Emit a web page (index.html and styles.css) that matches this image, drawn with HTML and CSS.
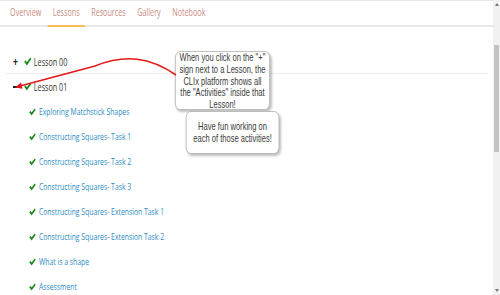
FILE: index.html
```html
<!DOCTYPE html>
<html lang="en">
<head>
  <meta charset="UTF-8">
  <title>Lessons</title>
  <link rel="stylesheet" href="styles.css">
</head>
<body>
  <div class="page">
    <nav class="tabs">
      <a class="tab">Overview</a>
      <a class="tab active">Lessons</a>
      <a class="tab">Resources</a>
      <a class="tab">Gallery</a>
      <a class="tab">Notebook</a>
    </nav>

    <div class="lessons">
      <div class="lesson first">
        <span class="toggle">+</span><svg class="check" viewBox="0 0 10 8"><path d="M0.6 4.2 L2.2 2.8 L3.9 4.6 L8.2 0.4 L9.6 1.8 L3.9 7.6 Z"/></svg>Lesson 00
      </div>
      <div class="lesson">
        <span class="toggle minus"></span><svg class="check" viewBox="0 0 10 8"><path d="M0.6 4.2 L2.2 2.8 L3.9 4.6 L8.2 0.4 L9.6 1.8 L3.9 7.6 Z"/></svg>Lesson 01
      </div>
      <ul class="activities">
        <li><svg class="check" viewBox="0 0 10 8"><path d="M0.6 4.2 L2.2 2.8 L3.9 4.6 L8.2 0.4 L9.6 1.8 L3.9 7.6 Z"/></svg><a>Exploring Matchstick Shapes</a></li>
        <li><svg class="check" viewBox="0 0 10 8"><path d="M0.6 4.2 L2.2 2.8 L3.9 4.6 L8.2 0.4 L9.6 1.8 L3.9 7.6 Z"/></svg><a>Constructing Squares- Task 1</a></li>
        <li><svg class="check" viewBox="0 0 10 8"><path d="M0.6 4.2 L2.2 2.8 L3.9 4.6 L8.2 0.4 L9.6 1.8 L3.9 7.6 Z"/></svg><a>Constructing Squares- Task 2</a></li>
        <li><svg class="check" viewBox="0 0 10 8"><path d="M0.6 4.2 L2.2 2.8 L3.9 4.6 L8.2 0.4 L9.6 1.8 L3.9 7.6 Z"/></svg><a>Constructing Squares- Task 3</a></li>
        <li><svg class="check" viewBox="0 0 10 8"><path d="M0.6 4.2 L2.2 2.8 L3.9 4.6 L8.2 0.4 L9.6 1.8 L3.9 7.6 Z"/></svg><a>Constructing Squares- Extension Task 1</a></li>
        <li><svg class="check" viewBox="0 0 10 8"><path d="M0.6 4.2 L2.2 2.8 L3.9 4.6 L8.2 0.4 L9.6 1.8 L3.9 7.6 Z"/></svg><a>Constructing Squares- Extension Task 2</a></li>
        <li><svg class="check" viewBox="0 0 10 8"><path d="M0.6 4.2 L2.2 2.8 L3.9 4.6 L8.2 0.4 L9.6 1.8 L3.9 7.6 Z"/></svg><a>What is a shape</a></li>
        <li><svg class="check" viewBox="0 0 10 8"><path d="M0.6 4.2 L2.2 2.8 L3.9 4.6 L8.2 0.4 L9.6 1.8 L3.9 7.6 Z"/></svg><a>Assessment</a></li>
      </ul>
    </div>

    <div class="callout callout-one">When you click on the "+"<br>sign next to a Lesson, the<br>CLIx platform shows all<br>the "Activities" inside that<br>Lesson!</div>
    <div class="callout callout-two">Have fun working on<br>each of those activities!</div>
  </div>

  <svg class="arrow" width="500" height="295" viewBox="0 0 500 295">
    <path d="M176 75 C150 57 125 54 95 66 L21 85.8" fill="none" stroke="#e2191b" stroke-width="1.6"/>
    <polygon points="15,87.5 22.6,88.8 21,82.6" fill="#e2191b"/>
  </svg>

  <div class="scrollbar">
    <div class="scroll-up"></div>
    <div class="thumb"></div>
    <div class="scroll-down"></div>
  </div>
</body>
</html>
```

FILE: styles.css
```css
body {
  margin: 0;
  width: 500px;
  height: 295px;
  overflow: hidden;
  background: #fff;
  font-family: 'Open Sans', sans-serif;
  color: #333;
  position: relative;
}
.page {
  position: relative;
  width: 685px;
  transform: scaleX(0.72);
  transform-origin: 0 0;
}
.tabs {
  display: flex;
  gap: 2px;
  height: 24px;
  padding-left: 7px;
  border-top: 1px solid #e6e6e6;
  border-bottom: 2px solid #e8e8e8;
}
.tab {
  padding: 0 7px;
  font-size: 10px;
  line-height: 23px;
  color: #c98b80;
  border-bottom: 2px solid transparent;
  margin-bottom: -2px;
}
.tab.active {
  border-bottom-color: #f7bd55;
}
.lessons {
  padding: 23px 7px 0 8px;
}
.lesson {
  display: flex;
  align-items: center;
  height: 25px;
  font-size: 10px;
  color: #333;
  padding-left: 10px;
}
.lesson.first {
  height: 23px;
  border-bottom: 1px solid #ececec;
}
.toggle {
  display: inline-block;
  width: 15px;
  font-weight: bold;
  font-size: 12px;
  line-height: 12px;
  color: #222;
}
.toggle.minus::before {
  content: "";
  display: block;
  width: 9px;
  height: 2px;
  margin-top: 1px;
  background: #222;
}
.lesson .check {
  width: 11px;
  height: 9px;
  margin-right: 3px;
}
.check {
  width: 10px;
  height: 8px;
  margin-right: 2px;
  fill: #1b8a1b;
  flex-shrink: 0;
}
.activities {
  list-style: none;
  margin: 0;
  padding: 0 0 0 32px;
}
.activities li {
  display: flex;
  align-items: center;
  height: 25px;
  font-size: 9.5px;
}
.activities .check {
  margin-right: 4px;
}
.activities a {
  color: #2c8cc4;
}
.callout {
  position: absolute;
  box-sizing: border-box;
  background: #fff;
  border: 1px solid #b5b5b5;
  border-radius: 7px;
  box-shadow: 2px 2px 3px rgba(0, 0, 0, 0.25);
  font-family: 'Liberation Sans', Arial, sans-serif;
  font-size: 10.5px;
  line-height: 11.8px;
  color: #3a3a3a;
  text-align: center;
  white-space: nowrap;
}
.callout-one {
  left: 243px;
  top: 51px;
  width: 132px;
  height: 59px;
  padding: 0 2px;
}
.callout-two {
  left: 258px;
  top: 111px;
  width: 130px;
  height: 43px;
  padding: 9px 2px 0;
}
.arrow {
  position: absolute;
  left: 0;
  top: 0;
}
.scrollbar {
  position: absolute;
  right: 0;
  top: 0;
  width: 7px;
  height: 295px;
  background: #f1f1f1;
}
.thumb {
  position: absolute;
  left: 1px;
  top: 45px;
  width: 5px;
  height: 107px;
  background: #c3c3c3;
}
.scroll-up, .scroll-down {
  position: absolute;
  left: 2px;
  width: 0;
  height: 0;
  border-left: 2px solid transparent;
  border-right: 2px solid transparent;
}
.scroll-up {
  top: 3px;
  border-bottom: 3px solid #777;
}
.scroll-down {
  bottom: 3px;
  border-top: 3px solid #777;
}
```
